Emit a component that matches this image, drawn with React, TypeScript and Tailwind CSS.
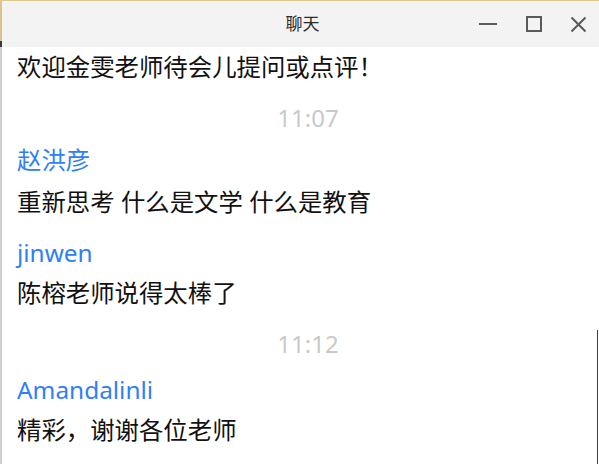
import React from "react";

const font = { fontFamily: '"Noto Sans", "Noto Sans CJK SC", sans-serif' };

function Name({ children, mt }: { children: React.ReactNode; mt: string }) {
  return (
    <div className={`h-10 leading-10 text-[24.4px] text-[#2f80f8] ${mt}`}>{children}</div>
  );
}

export default function App() {
  return (
    <div className="w-[599px] h-[464px] overflow-hidden bg-white flex flex-col" style={font}>
      <div className="h-px bg-[#dccb90] shrink-0" />
      <div className="flex flex-1 min-h-0">
        <div className="w-[2px] flex flex-col shrink-0">
          <div className="h-[40px] bg-[#d9c58c]" />
          <div className="h-[6px] bg-[#3a3a3a]" />
          <div className="flex-1 bg-[#cfcfcf]" />
        </div>
        <div className="flex-1 flex flex-col min-w-0">
          <div className="h-[46px] bg-[#f3f3f3] flex items-center relative shrink-0">
            <div className="flex-1 text-center text-[17px] text-[#2a2a2a] pl-[4px]">聊天</div>
            <div className="absolute right-0 top-0 h-full flex items-center">
              <div className="w-[46px] flex justify-center">
                <div className="w-[18px] h-[2px] bg-[#5a5a5a]" />
              </div>
              <div className="w-[46px] flex justify-center">
                <div className="w-[16px] h-[16px] border-2 border-[#5a5a5a]" />
              </div>
              <div className="w-[42px] flex justify-center">
                <svg width="17" height="17" viewBox="0 0 17 17">
                  <path d="M1.5 1.5 L15.5 15.5 M15.5 1.5 L1.5 15.5" stroke="#5a5a5a" strokeWidth="2" />
                </svg>
              </div>
            </div>
          </div>
          <div className="flex flex-1 min-h-0">
            <div className="flex-1 flex flex-col pl-[15px] text-[24.4px] text-[#111111]">
              <div className="h-10 leading-10">欢迎金雯老师待会儿提问或点评！</div>
              <div className="mt-[11px] h-10 leading-10 text-center text-[#c9c9c9] pl-[2px] text-[24px]">11:07</div>
              <Name mt="mt-[2px]">赵洪彦</Name>
              <div className="mt-[2px] h-10 leading-10">重新思考 什么是文学 什么是教育</div>
              <Name mt="mt-[11px]">jinwen</Name>
              <div className="h-10 leading-10">陈榕老师说得太棒了</div>
              <div className="mt-[11px] h-10 leading-10 text-center text-[#c9c9c9] pl-[2px] text-[24px]">11:12</div>
              <Name mt="mt-[6px]">Amandalinli</Name>
              <div className="h-10 leading-10">精彩，谢谢各位老师</div>
            </div>
            <div className="w-[2px] flex flex-col shrink-0">
              <div className="h-[283px]" />
              <div className="flex-1 w-px bg-[#3b3f58]" />
            </div>
          </div>
        </div>
      </div>
    </div>
  );
}
